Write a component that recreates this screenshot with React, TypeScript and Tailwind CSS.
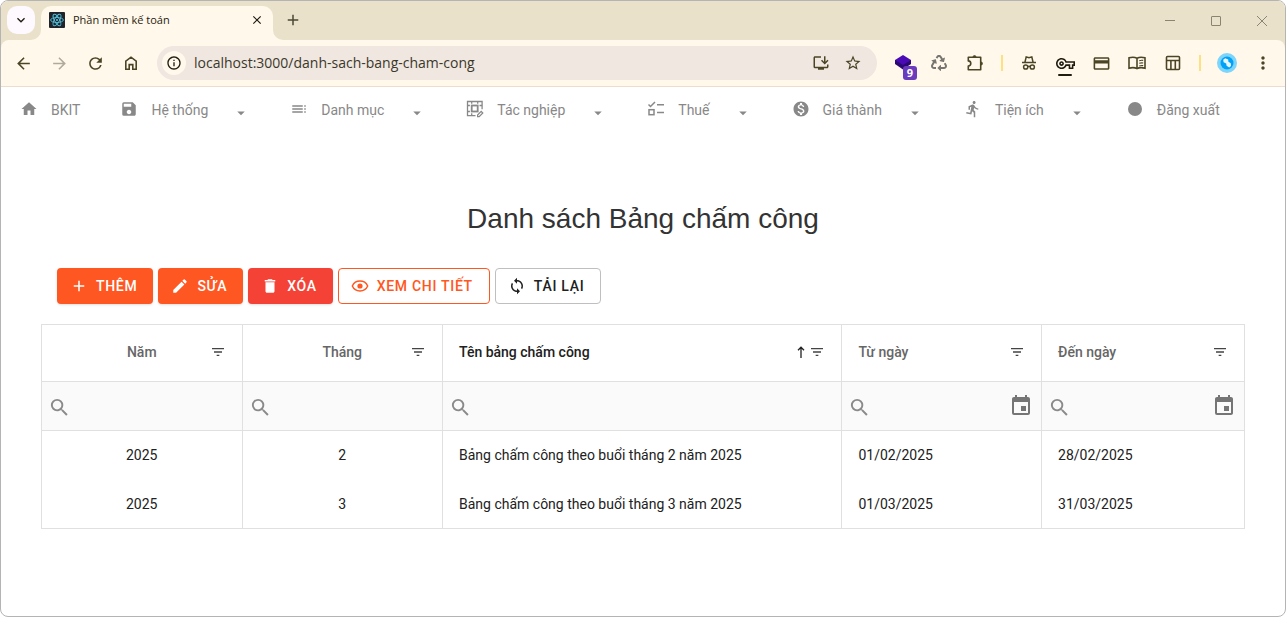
import type { ReactNode } from 'react';
import { FaRecycle } from 'react-icons/fa';
import {
  MdAdd,
  MdArrowBack,
  MdArrowDropDown,
  MdArrowForward,
  MdClose,
  MdDelete,
  MdDirectionsRun,
  MdEdit,
  MdEvent,
  MdFilterList,
  MdHome,
  MdInfoOutline,
  MdInstallDesktop,
  MdKeyboardArrowDown,
  MdMonetizationOn,
  MdMoreVert,
  MdOutlineCreditCard,
  MdOutlineVpnKey,
  MdRefresh,
  MdSave,
  MdSearch,
  MdStarBorder,
  MdSync,
  MdToc,
} from 'react-icons/md';

interface MenuItem {
  text: string;
  icon: ReactNode;
  hasItems?: boolean;
}

interface Column {
  field: string;
  caption: string;
  width: string;
  center?: boolean;
  sorted?: boolean;
  date?: boolean;
}

const ReactLogo = () => (
  <svg viewBox="0 0 16 16" className="size-4 shrink-0" fill="none" stroke="#53c1de" strokeWidth="0.9">
    <rect width="16" height="16" rx="1" fill="#20232a" stroke="none" />
    <ellipse cx="8" cy="8" rx="6.4" ry="2.5" />
    <ellipse cx="8" cy="8" rx="6.4" ry="2.5" transform="rotate(60 8 8)" />
    <ellipse cx="8" cy="8" rx="6.4" ry="2.5" transform="rotate(120 8 8)" />
    <circle cx="8" cy="8" r="1.1" fill="#53c1de" stroke="none" />
  </svg>
);

const HouseIcon = () => (
  <svg viewBox="0 0 20 20" className="size-5" fill="none" stroke="currentColor" strokeWidth="1.6">
    <path d="M4.8 16.2V8.2L10 4.2l5.2 4v8h-3.4v-4.6H8.2v4.6z" />
  </svg>
);

const PuzzleIcon = () => (
  <svg viewBox="0 0 20 20" className="size-5" fill="none" stroke="currentColor" strokeWidth="1.6" strokeLinejoin="round">
    <path d="M3.3 4.3h12.4v12.4H3.3v-3.6c1.500-.2 2.500-1.200 2.500-2.600S4.800 8.100 3.300 7.900z" />
    <path d="M8 4a1.500 1.500 0 0 1 3 0zM16 9a1.500 1.500 0 0 1 0 3z" fill="currentColor" strokeWidth="0.8" />
  </svg>
);

const IncognitoIcon = () => (
  <svg viewBox="0 0 20 20" className="size-5" fill="none" stroke="currentColor" strokeWidth="1.5">
    <path d="M6 9 7.2 3.9l2.800.8 2.800-.8L14 9M3 9.600h14" />
    <circle cx="6.700" cy="14" r="2.100" />
    <circle cx="13.300" cy="14" r="2.100" />
    <path d="M8.800 13.600q1.200-.8 2.400 0" />
  </svg>
);

const BookIcon = () => (
  <svg viewBox="0 0 20 20" className="size-5" fill="none" stroke="currentColor" strokeWidth="1.6">
    <path d="M10 15.600c-2.400-1.300-5-1.300-8-.4V4.800c3-.9 5.600-.9 8 .4 2.400-1.300 5-1.300 8-.4v10.400c-3-.9-5.600-.9-8 .4zM10 5.200v10.400" />
    <path d="M12.200 7.700q2-.7 4-.3M12.200 10.300q2-.7 4-.3M12.200 12.900q2-.7 4-.3" strokeWidth="1.100" />
  </svg>
);

const PanelIcon = () => (
  <svg viewBox="0 0 20 20" className="size-5" fill="none" stroke="currentColor" strokeWidth="1.6">
    <rect x="3.500" y="3.500" width="13" height="13" rx="1" />
    <path d="M3.500 7.500h13M7.900 7.500v9M12.300 7.500v9" />
  </svg>
);

const LayersIcon = () => (
  <svg viewBox="0 0 20 20" className="size-5">
    <path d="M2 7v4l8 5.500 8-5.500V7z" fill="#2a0a72" />
    <path d="m10 2 8 5-8 5-8-5z" fill="#4a0ab5" />
  </svg>
);

const AvatarIcon = () => (
  <svg viewBox="0 0 20 20" className="size-5">
    <circle cx="10" cy="10" r="10" fill="#7dd5fb" />
    <circle cx="10" cy="10" r="6.500" fill="#00a2f8" />
    <path d="m6.200 6.800 2-1.600 3 1.200.2 2.400 2.400 1.400.2 2.800-1.800 1.400-2.600-1.600-.4-2.400-2.600-1.200z" fill="#e6f6ff" />
  </svg>
);

const SheetEditIcon = () => (
  <svg viewBox="0 0 18 18" className="size-[18px]" fill="none" stroke="currentColor" strokeWidth="1.300">
    <path d="M9.500 15.600H1.500V1.500h14.600v7.800" />
    <rect x="5.700" y="5.500" width="6" height="6" strokeWidth="1.800" />
    <path d="M1.500 5.500h2.400M1.500 11.500h2.400M13.500 5.500h2.600M5.700 1.500v2.200M11.700 1.500v2.200M5.700 13.300v2.300" />
    <path d="m11.600 15 3.600-3.600 1.600 1.600-3.600 3.600h-1.600z" strokeWidth="1.200" />
  </svg>
);

const TaskIcon = () => (
  <svg viewBox="0 0 18 18" className="size-[18px]" fill="none" stroke="currentColor" strokeWidth="1.5">
    <path d="m1.500 4.500 2 2L8 2M10 4.700h7M10 12.500h7" />
    <rect x="2" y="9.700" width="5" height="5" />
  </svg>
);

const EyeIcon = () => (
  <svg viewBox="0 0 18 18" className="size-[18px]" fill="none" stroke="currentColor" strokeWidth="1.5">
    <path d="M1.300 9C2.700 5.900 5.600 4.100 9 4.100S15.300 5.900 16.700 9c-1.400 3.100-4.300 4.900-7.700 4.900S2.700 12.100 1.300 9z" />
    <circle cx="9" cy="9" r="2.600" fill="currentColor" stroke="none" />
  </svg>
);

const SortUpIcon = () => (
  <svg viewBox="0 0 8 12" className="h-3 w-2" fill="none" stroke="currentColor" strokeWidth="1.300">
    <path d="M4 12V1M1 4.200l3-3 3 3" />
  </svg>
);

const menuItems: MenuItem[] = [
  { text: 'BKIT', icon: <MdHome size={18} /> },
  { text: 'Hệ thống', icon: <MdSave size={18} />, hasItems: true },
  { text: 'Danh mục', icon: <MdToc size={18} />, hasItems: true },
  { text: 'Tác nghiệp', icon: <SheetEditIcon />, hasItems: true },
  { text: 'Thuế', icon: <TaskIcon />, hasItems: true },
  { text: 'Giá thành', icon: <MdMonetizationOn size={18} />, hasItems: true },
  { text: 'Tiện ích', icon: <MdDirectionsRun size={18} />, hasItems: true },
  { text: 'Đăng xuất', icon: <span className="size-[14px] rounded-full bg-[#888]" /> },
];

const columns: Column[] = [
  { field: 'nam', caption: 'Năm', width: 'w-1/6', center: true },
  { field: 'thang', caption: 'Tháng', width: 'w-1/6', center: true },
  { field: 'ten', caption: 'Tên bảng chấm công', width: 'w-[33.2%]', sorted: true },
  { field: 'tuNgay', caption: 'Từ ngày', width: 'w-[16.6%]', date: true },
  { field: 'denNgay', caption: 'Đến ngày', width: 'w-auto', date: true },
];

const rows: Record<string, string>[] = [
  {
    nam: '2025',
    thang: '2',
    ten: 'Bảng chấm công theo buổi tháng 2 năm 2025',
    tuNgay: '01/02/2025',
    denNgay: '28/02/2025',
  },
  {
    nam: '2025',
    thang: '3',
    ten: 'Bảng chấm công theo buổi tháng 3 năm 2025',
    tuNgay: '01/03/2025',
    denNgay: '31/03/2025',
  },
];

function ToolButton({ label, children }: { label: string; children: ReactNode }) {
  return (
    <button aria-label={label} className="relative flex h-8 w-9 shrink-0 items-center justify-center">
      {children}
    </button>
  );
}

function TabStrip() {
  return (
    <div className="flex h-[39px] items-end bg-[#e9e1c9] pl-[6px]">
      <button
        aria-label="Search tabs"
        className="mb-[6px] flex size-7 items-center justify-center rounded-[10px] bg-[#fef8ff] text-[#1f1c10]"
      >
        <MdKeyboardArrowDown size={16} />
      </button>
      <div className="relative ml-[6px] flex h-[34px] w-[232px] items-center rounded-t-[10px] bg-[#fff8eb] pr-2 pb-[6px] pl-2">
        <svg viewBox="0 0 10 10" className="absolute bottom-0 -left-[10px] size-[10px]" fill="#fff8eb">
          <path d="M10 0v10H0A10 10 0 0 0 10 0z" />
        </svg>
        <svg viewBox="0 0 10 10" className="absolute -right-[10px] bottom-0 size-[10px]" fill="#fff8eb">
          <path d="M0 0v10h10A10 10 0 0 1 0 0z" />
        </svg>
        <ReactLogo />
        <span className="ml-2 flex-1 font-['Open_Sans',sans-serif] text-[11px] text-[#1f1c10]">Phần mềm kế toán</span>
        <button aria-label="Close tab" className="flex size-4 items-center justify-center text-[#1f1c10]">
          <MdClose size={14} />
        </button>
      </div>
      <button aria-label="New tab" className="mb-[6px] ml-[6px] flex size-7 items-center justify-center text-[#4b4735]">
        <MdAdd size={18} />
      </button>
      <div className="ml-auto flex h-full text-[#8a8472]">
        <button aria-label="Minimize" className="flex w-[46px] items-center justify-center">
          <span className="w-[10px] border-t border-current" />
        </button>
        <button aria-label="Maximize" className="flex w-[46px] items-center justify-center">
          <span className="size-[10px] rounded-[1px] border border-current" />
        </button>
        <button aria-label="Close window" className="flex w-[46px] items-center justify-center">
          <svg viewBox="0 0 10 10" className="size-[10px]" stroke="currentColor">
            <path d="m0 0 10 10M10 0 0 10" />
          </svg>
        </button>
      </div>
    </div>
  );
}

function AddressBar() {
  return (
    <div className="bg-[#e9e1c9]">
      <div className="flex h-[47px] items-center rounded-t-lg border-b border-[#ebdfcb] bg-[#fff8eb] px-1 text-[#4b4526]">
        <ToolButton label="Back">
          <MdArrowBack size={19} />
        </ToolButton>
        <ToolButton label="Forward">
          <MdArrowForward size={19} className="text-[#b0aa9c]" />
        </ToolButton>
        <ToolButton label="Reload">
          <MdRefresh size={19} />
        </ToolButton>
        <ToolButton label="Home">
          <HouseIcon />
        </ToolButton>
        <div className="mx-2 flex h-[34px] flex-1 items-center rounded-full bg-[#efe7e0] pr-2 pl-[5px]">
          <button
            aria-label="Site information"
            className="flex size-6 items-center justify-center rounded-full bg-[#fff8eb] text-[#1f1c10]"
          >
            <MdInfoOutline size={16} />
          </button>
          <input
            aria-label="Address"
            defaultValue="localhost:3000/danh-sach-bang-cham-cong"
            className="ml-2 min-w-0 flex-1 bg-transparent font-['Open_Sans',sans-serif] text-sm text-[#3c382c] outline-none"
          />
          <button aria-label="Install app" className="flex h-8 w-8 items-center justify-center">
            <MdInstallDesktop size={18} />
          </button>
          <button aria-label="Bookmark" className="flex h-8 w-8 items-center justify-center">
            <MdStarBorder size={18} />
          </button>
        </div>
        <ToolButton label="Extension">
          <LayersIcon />
          <span className="absolute right-1 -bottom-px flex size-[14px] items-center justify-center rounded-[3px] bg-[#6b3bbd] font-['Open_Sans',sans-serif] text-[11px] font-bold text-white">
            9
          </span>
        </ToolButton>
        <ToolButton label="Recycle extension">
          <FaRecycle size={16} className="text-[#777570]" />
        </ToolButton>
        <ToolButton label="Extensions">
          <PuzzleIcon />
        </ToolButton>
        <span className="mx-2 h-4 w-[2px] bg-[#fbe184]" />
        <ToolButton label="Incognito">
          <IncognitoIcon />
        </ToolButton>
        <ToolButton label="Passwords">
          <MdOutlineVpnKey size={19} className="text-[#1f1c10]" />
          <span className="absolute bottom-[3px] h-[2px] w-[14px] rounded-full bg-[#1f1c10]" />
        </ToolButton>
        <ToolButton label="Payment methods">
          <MdOutlineCreditCard size={19} />
        </ToolButton>
        <ToolButton label="Reading mode">
          <BookIcon />
        </ToolButton>
        <ToolButton label="Side panel">
          <PanelIcon />
        </ToolButton>
        <span className="mx-2 h-4 w-[2px] bg-[#fbe184]" />
        <ToolButton label="Profile">
          <AvatarIcon />
        </ToolButton>
        <ToolButton label="Menu">
          <MdMoreVert size={20} />
        </ToolButton>
      </div>
    </div>
  );
}

function MainMenu() {
  return (
    <nav className="flex h-[46px] items-center gap-10 pl-[19px] text-sm whitespace-nowrap text-[#888]">
      {menuItems.map((item) => (
        <a key={item.text} href="#" className="flex items-center">
          <span className="mb-[2px] flex size-[18px] items-center justify-center">{item.icon}</span>
          <span className="ml-[13px]">{item.text}</span>
          {item.hasItems && <MdArrowDropDown size={18} className="mt-[6px] ml-6" />}
        </a>
      ))}
    </nav>
  );
}

function Toolbar() {
  return (
    <div className="flex gap-[5px] px-4 text-sm font-medium tracking-wider">
      <button className="flex h-9 items-center gap-2 rounded bg-[#ff5722] pr-4 pl-[13px] text-white shadow">
        <MdAdd size={18} />
        THÊM
      </button>
      <button className="flex h-9 items-center gap-2 rounded bg-[#ff5722] pr-4 pl-[13px] text-white shadow">
        <MdEdit size={18} />
        SỬA
      </button>
      <button className="flex h-9 items-center gap-2 rounded bg-[#f44336] pr-4 pl-[13px] text-white shadow">
        <MdDelete size={18} />
        XÓA
      </button>
      <button className="flex h-9 items-center gap-2 rounded border border-[#ff5722] pr-4 pl-[12px] text-[#ff5722]">
        <EyeIcon />
        XEM CHI TIẾT
      </button>
      <button className="flex h-9 items-center gap-2 rounded border border-[#bfbfbf] pr-4 pl-[12px] text-[#212121]">
        <MdSync size={18} />
        TẢI LẠI
      </button>
    </div>
  );
}

function TimesheetGrid() {
  return (
    <table className="mt-5 w-full table-fixed border-collapse border border-[#e0e0e0] text-sm text-[#212121]">
      <thead>
        <tr className="h-[57px]">
          {columns.map((col) => (
            <th
              key={col.field}
              className={`${col.width} border border-[#e0e0e0] px-4 pb-[2px] text-left font-medium ${col.sorted ? 'text-[#212121]' : 'text-[#666]'}`}
            >
              <div className="flex items-center">
                {col.center && <span className="w-5" />}
                <span className={`flex-1 ${col.center ? 'text-center' : ''}`}>{col.caption}</span>
                {col.sorted && <SortUpIcon />}
                <button aria-label={`Lọc ${col.caption}`} className="ml-1 text-[#444]">
                  <MdFilterList size={16} className="block" />
                </button>
              </div>
            </th>
          ))}
        </tr>
        <tr className="h-[49px] bg-[#fafafa]">
          {columns.map((col) => (
            <td key={col.field} className="border border-[#e0e0e0] pr-2 pl-[6px]">
              <div className="flex items-center text-[#8a8a8a]">
                <label htmlFor={`filter-${col.field}`} aria-label={col.caption} className="mt-[2px]">
                  <MdSearch size={23} />
                </label>
                <input id={`filter-${col.field}`} className="ml-2 min-w-0 flex-1 bg-transparent outline-none" />
                {col.date && (
                  <button aria-label={`Chọn ${col.caption}`} className="text-[#757575]">
                    <MdEvent size={24} className="block" />
                  </button>
                )}
              </div>
            </td>
          ))}
        </tr>
      </thead>
      <tbody>
        {rows.map((row) => (
          <tr key={row.thang} className="h-[49px]">
            {columns.map((col) => (
              <td key={col.field} className={`border-x border-[#e0e0e0] px-4 ${col.center ? 'text-center' : ''}`}>
                {row[col.field]}
              </td>
            ))}
          </tr>
        ))}
      </tbody>
    </table>
  );
}

export default function App() {
  return (
    <div className="min-h-screen overflow-hidden rounded-lg border border-[#b4b4b4] bg-white font-['Roboto',sans-serif]">
      <TabStrip />
      <AddressBar />
      <MainMenu />
      <main className="px-10 pt-[66px]">
        <h1 className="text-center font-['Liberation_Sans',sans-serif] text-[28px] leading-10 text-[#333]">
          Danh sách Bảng chấm công
        </h1>
        <div className="mt-[29px]">
          <Toolbar />
        </div>
        <TimesheetGrid />
      </main>
    </div>
  );
}
